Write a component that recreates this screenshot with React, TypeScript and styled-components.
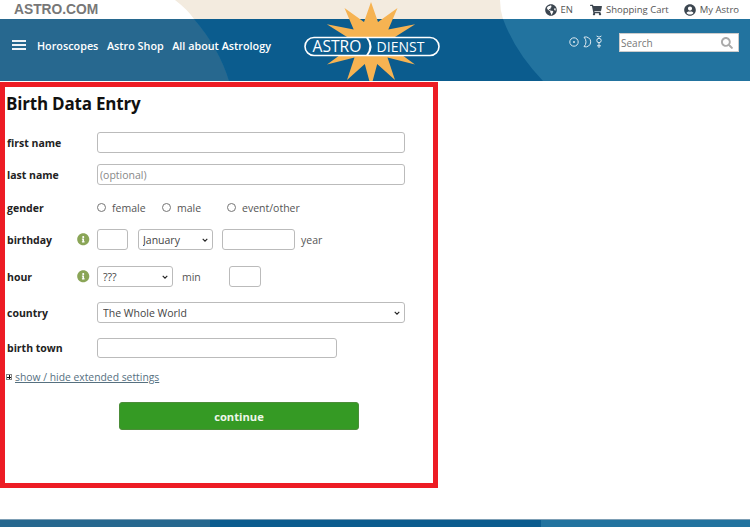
import styled, { createGlobalStyle } from "styled-components";
import {
  FaGlobeAmericas,
  FaInfoCircle,
  FaSearch,
  FaShoppingCart,
  FaUserCircle,
} from "react-icons/fa";

const GlobalStyle = createGlobalStyle`
  html, body {
    margin: 0;
    padding: 0;
    background: #fff;
  }
  body {
    font-family: "Open Sans", "Liberation Sans", sans-serif;
    color: #444;
  }
  * {
    box-sizing: border-box;
  }
`;

const chevron =
  "url(\"data:image/svg+xml,%3Csvg xmlns='http://www.w3.org/2000/svg' viewBox='0 0 10 7'%3E%3Cpath d='M1 1.5l4 4 4-4' fill='none' stroke='%23222' stroke-width='2'/%3E%3C/svg%3E\")";

const Page = styled.div`
  width: 750px;
  height: 527px;
  overflow: hidden;
`;

const Masthead = styled.header`
  position: relative;
  height: 81px;
  overflow: hidden;
  background: #fff;
`;

const Backdrop = styled.svg`
  position: absolute;
  left: 0;
  top: 0;
`;

const TopBar = styled.div`
  position: relative;
  height: 19px;
  display: flex;
  align-items: center;
  padding: 0 11px 0 14px;
`;

const Brand = styled.div`
  font-family: "Liberation Sans", Arial, sans-serif;
  font-weight: 700;
  font-size: 13.8px;
  color: #777;
  flex: 1;
`;

const TopLink = styled.a<{ $gap: number }>`
  display: flex;
  align-items: center;
  gap: 4px;
  margin-left: ${(props) => props.$gap}px;
  font-size: 9.5px;
  color: #555;
  svg {
    color: #3c4650;
    font-size: 12px;
  }
`;

const NavBar = styled.div`
  position: relative;
  height: 62px;
  display: flex;
  align-items: center;
  padding-bottom: 10px;
`;

const Burger = styled.div`
  width: 14px;
  height: 10px;
  margin-left: 12px;
  margin-right: 11px;
  border-top: 2px solid #f0f4f7;
  border-bottom: 2px solid #f0f4f7;
  position: relative;
  &::after {
    content: "";
    position: absolute;
    left: 0;
    right: 0;
    top: 2px;
    height: 2px;
    background: #f0f4f7;
  }
`;

const NavLink = styled.a`
  font-size: 10.8px;
  font-weight: 600;
  color: #fff;
  margin-right: 8.5px;
  white-space: nowrap;
`;

const Logo = styled.svg`
  position: absolute;
  left: 300px;
  top: -19px;
`;

const Planets = styled.svg`
  position: absolute;
  left: 568px;
  top: 15px;
`;

const SearchBox = styled.div`
  position: absolute;
  left: 619px;
  top: 14px;
  width: 120px;
  height: 19px;
  background: #fff;
  border: 1px solid #ccc;
  display: flex;
  align-items: center;
  justify-content: space-between;
  padding: 0 5px 0 1px;
  font-size: 10px;
  color: #777;
  svg {
    font-size: 12px;
    color: #aaa;
  }
`;

const FormBox = styled.main`
  width: 438px;
  height: 406px;
  margin-top: 1px;
  border: 5px solid #ed1c24;
  padding: 4px 0 0 1px;
`;

const Title = styled.h1`
  margin: 0 0 15px;
  font-size: 17px;
  line-height: 26px;
  font-weight: 700;
  letter-spacing: -0.2px;
  color: #111;
`;

const Row = styled.div<{ $top: number; $height?: number }>`
  display: flex;
  align-items: center;
  margin-top: ${(props) => props.$top}px;
  height: ${(props) => props.$height ?? 21}px;
  font-size: 10.5px;
`;

const Label = styled.label`
  width: 71px;
  padding-left: 1px;
  font-weight: 700;
  font-size: 10.5px;
  color: #222;
`;

const InfoSlot = styled.div`
  width: 20px;
  display: flex;
  align-items: center;
  svg {
    color: #8aa557;
    font-size: 12.5px;
  }
`;

const TextInput = styled.input<{ $width: number; $left?: number }>`
  width: ${(props) => props.$width}px;
  height: 100%;
  margin: 0 0 0 ${(props) => props.$left ?? 0}px;
  padding: 0 2px;
  border: 1px solid #bbb;
  border-radius: 3px;
  background: #fff;
  font-family: inherit;
  font-size: 10.5px;
  &::placeholder {
    color: #888;
    opacity: 1;
  }
`;

const Select = styled.select<{ $width: number; $left?: number; $pad?: number }>`
  appearance: none;
  width: ${(props) => props.$width}px;
  height: 100%;
  margin: 0 0 0 ${(props) => props.$left ?? 0}px;
  padding: 0 0 0 ${(props) => props.$pad ?? 5}px;
  border: 1px solid #bbb;
  border-radius: 3px;
  background: #fff ${chevron} no-repeat right 4px center / 6px 4px;
  font-family: inherit;
  font-size: 10.5px;
  color: #444;
`;

const Radio = styled.input.attrs({ type: "radio", name: "gender" })`
  width: 9px;
  height: 9px;
  margin: 0 6px 0 0;
`;

const Choice = styled.label<{ $width: number }>`
  display: flex;
  align-items: center;
  width: ${(props) => props.$width}px;
  font-size: 10.5px;
  color: #555;
`;

const Unit = styled.span<{ $left: number }>`
  margin-left: ${(props) => props.$left}px;
  color: #555;
`;

const ToggleRow = styled.div`
  display: flex;
  align-items: center;
  margin-top: 11px;
  height: 16px;
`;

const PlusBox = styled.span`
  width: 6px;
  height: 6px;
  margin-right: 3px;
  border: 1px solid #888;
  background:
    linear-gradient(#111, #111) center / 4px 1px no-repeat,
    linear-gradient(#111, #111) center / 1px 4px no-repeat;
`;

const ToggleLink = styled.a`
  font-size: 10.35px;
  color: #56707f;
  text-decoration: underline;
`;

const ContinueButton = styled.button`
  display: block;
  width: 240px;
  height: 28px;
  margin: 17px 0 0 113px;
  border: 1px solid #4c8d39;
  border-radius: 3px;
  background: #359a24;
  color: #eef7ea;
  font-family: inherit;
  font-size: 11.2px;
  font-weight: 700;
`;

const Footer = styled.footer`
  margin-top: 31px;
  height: 8px;
  border-top: 1px solid #7d9fb5;
  background: linear-gradient(
    to right,
    #27688f 0 210px,
    #0b5c8e 210px 541px,
    #22739f 541px
  );
`;

// spike angle off the vertical and its length, one side of the star
const spikes: [number, number][] = [
  [0, 41],
  [37, 44],
  [67, 48],
  [90, 40],
  [116, 49],
  [147, 44],
  [180, 44],
];

const starPoints = () => {
  const cx = 71;
  const cy = 43;
  const left = spikes
    .slice(1, -1)
    .reverse()
    .map(([a, r]) => [360 - a, r] as [number, number]);
  const all = [...spikes, ...left];
  const points: string[] = [];
  all.forEach(([angle, radius], i) => {
    const next = i + 1 < all.length ? all[i + 1][0] : 360;
    const valley = (angle + next) / 2;
    const toPoint = (deg: number, r: number) => {
      const rad = (deg * Math.PI) / 180;
      return `${(cx + r * Math.sin(rad)).toFixed(1)},${(cy - r * Math.cos(rad)).toFixed(1)}`;
    };
    points.push(toPoint(angle, radius), toPoint(valley, 22));
  });
  return points.join(" ");
};

function App() {
  return (
    <Page>
      <GlobalStyle />
      <Masthead>
        <Backdrop width="750" height="81" viewBox="0 0 750 81">
          <path d="M175 0 Q188 10 194 19 L503 19 Q500 10 500 0 Z" fill="#f3ebdf" />
          <path d="M0 19 H750 V81 H0 Z" fill="#22739f" />
          <path d="M0 19 H194 Q219 48 229 81 H0 Z" fill="#27688f" />
          <path d="M194 19 H503 Q515 52 543 81 H229 Q219 48 194 19 Z" fill="#0b5c8e" />
        </Backdrop>
        <TopBar>
          <Brand>ASTRO.COM</Brand>
          <TopLink $gap={0}>
            <FaGlobeAmericas />
            EN
          </TopLink>
          <TopLink $gap={17}>
            <FaShoppingCart />
            Shopping Cart
          </TopLink>
          <TopLink $gap={15}>
            <FaUserCircle />
            My Astro
          </TopLink>
        </TopBar>
        <NavBar>
          <Burger />
          <NavLink>Horoscopes</NavLink>
          <NavLink>Astro Shop</NavLink>
          <NavLink>All about Astrology</NavLink>
          <Logo width="150" height="100" viewBox="0 0 150 100">
            <polygon points={starPoints()} fill="#f6b352" />
            <rect x="5" y="37.5" width="134" height="18" rx="9" fill="#0b5c8e" stroke="#fff" strokeWidth="1.6" />
            <path d="M67 37.5 Q74 46.5 67 55.5" fill="none" stroke="#fff" strokeWidth="2" />
            <text x="37" y="51.5" textAnchor="middle" fontFamily="Open Sans" fontSize="15.6" fill="#fff">
              ASTRO
            </text>
            <text x="100.5" y="51.5" textAnchor="middle" fontFamily="Open Sans" fontWeight="500" fontSize="14" fill="#fff">
              DIENST
            </text>
          </Logo>
          <Planets width="36" height="16" viewBox="0 0 36 16" fill="none" stroke="#dfeaf1" strokeWidth="1">
            <circle cx="6" cy="8" r="4.2" />
            <circle cx="6" cy="8" r="0.6" fill="#dfeaf1" />
            <path d="M16 3.2 A5 5 0 1 1 16 12.6 A6.5 6.5 0 0 0 16 3.2 Z" />
            <circle cx="31" cy="6.5" r="2.2" />
            <path d="M28.6 2 Q31 4.4 33.4 2 M31 8.7 V14 M29 11.8 H33" />
          </Planets>
          <SearchBox>
            Search
            <FaSearch />
          </SearchBox>
        </NavBar>
      </Masthead>
      <FormBox>
        <Title>Birth Data Entry</Title>
        <Row $top={0}>
          <Label>first name</Label>
          <InfoSlot />
          <TextInput $width={308} />
        </Row>
        <Row $top={11}>
          <Label>last name</Label>
          <InfoSlot />
          <TextInput $width={308} placeholder="(optional)" />
        </Row>
        <Row $top={12} $height={21}>
          <Label>gender</Label>
          <InfoSlot />
          <Choice $width={65}>
            <Radio />
            female
          </Choice>
          <Choice $width={65}>
            <Radio />
            male
          </Choice>
          <Choice $width={80}>
            <Radio />
            event/other
          </Choice>
        </Row>
        <Row $top={11}>
          <Label>birthday</Label>
          <InfoSlot>
            <FaInfoCircle />
          </InfoSlot>
          <TextInput $width={31} />
          <Select $width={75} $left={10} $pad={4} defaultValue="January">
            <option>January</option>
          </Select>
          <TextInput $width={73} $left={9} />
          <Unit $left={6}>year</Unit>
        </Row>
        <Row $top={16}>
          <Label>hour</Label>
          <InfoSlot>
            <FaInfoCircle />
          </InfoSlot>
          <Select $width={76} defaultValue="???">
            <option>???</option>
          </Select>
          <Unit $left={9}>min</Unit>
          <TextInput $width={32} $left={28} />
        </Row>
        <Row $top={15}>
          <Label>country</Label>
          <InfoSlot />
          <Select $width={308} defaultValue="The Whole World">
            <option>The Whole World</option>
          </Select>
        </Row>
        <Row $top={15} $height={20}>
          <Label>birth town</Label>
          <InfoSlot />
          <TextInput $width={240} />
        </Row>
        <ToggleRow>
          <PlusBox />
          <ToggleLink>show / hide extended settings</ToggleLink>
        </ToggleRow>
        <ContinueButton>continue</ContinueButton>
      </FormBox>
      <Footer />
    </Page>
  );
}

export default App;
